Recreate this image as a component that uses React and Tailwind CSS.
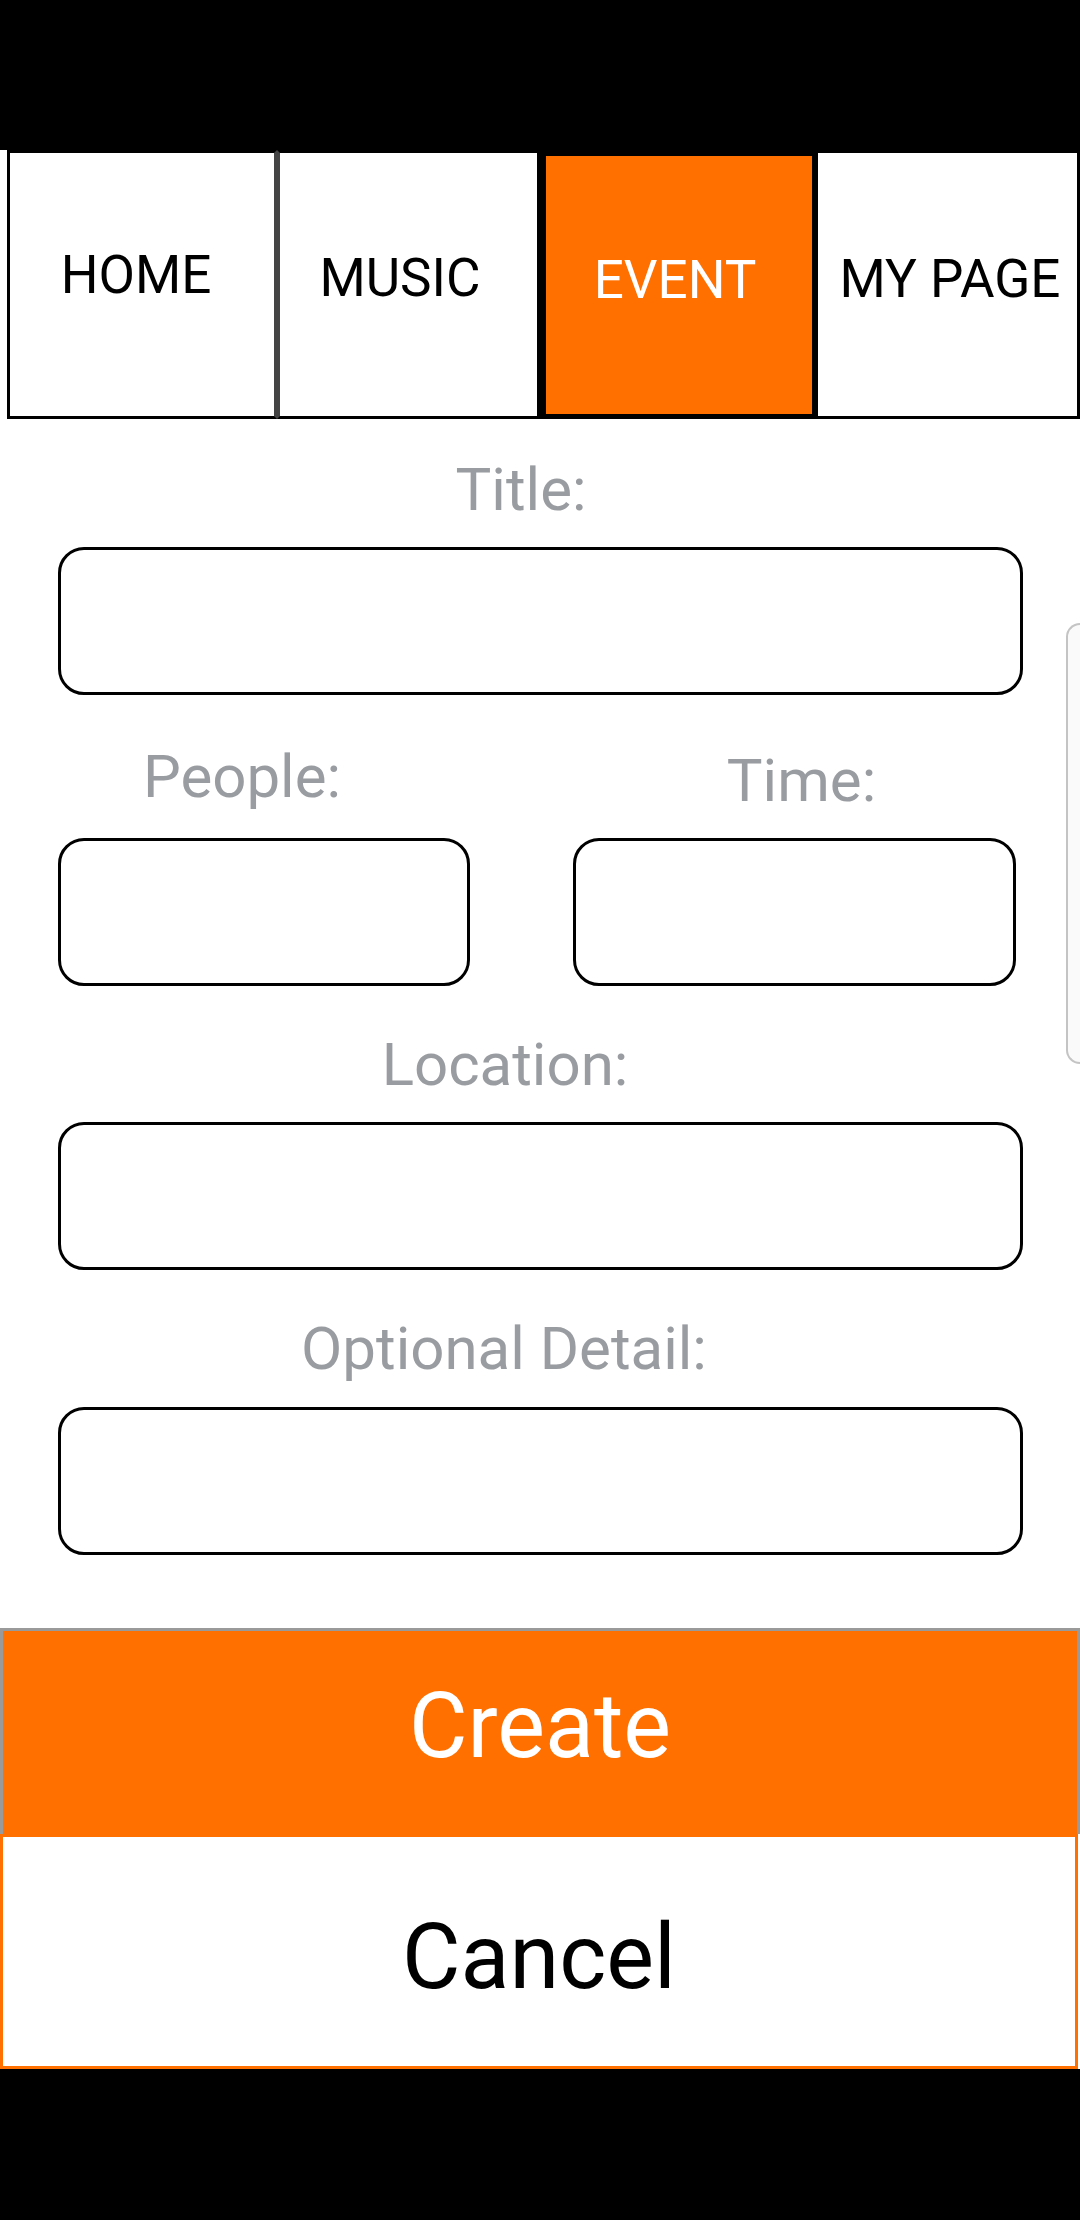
import React from "react";

const font = { fontFamily: 'Roboto, "Noto Sans", "Liberation Sans", sans-serif' };

function Label({ children, className = "" }) {
  return (
    <div
      className={`h-[60px] text-[60px] leading-none text-[#999ca0] whitespace-nowrap ${className}`}
    >
      {children}
    </div>
  );
}

function Field({ className = "" }) {
  return (
    <input
      type="text"
      className={`block h-[148px] border-[3px] border-black rounded-[26px] bg-white outline-none ${className}`}
    />
  );
}

export default function App() {
  return (
    <div className="relative w-[1080px] h-[2220px] flex flex-col bg-white overflow-hidden" style={font}>
      {/* status bar */}
      <div className="h-[150px] bg-black shrink-0" />

      {/* tabs */}
      <div className="flex h-[269px] shrink-0 pl-[7px]">
        <div className="w-[270px] h-full border-[3px] border-black border-r-[#444] bg-white flex items-center justify-center pb-[18px] pr-[12px] text-[53px] leading-none text-black">
          HOME
        </div>
        <div className="w-[263px] h-full border-[3px] border-black border-l-[#444] bg-white flex items-center justify-center pb-[13px] pr-[17px] text-[53px] leading-none text-black">
          MUSIC
        </div>
        <div className="w-[278px] h-full border-[6px] border-b-[5px] border-black bg-[#ff7000] flex items-center justify-center pb-[9px] pr-[8px] text-[53px] leading-none text-white">
          EVENT
        </div>
        <div className="w-[262px] h-full border-[3px] border-black border-l-0 bg-white flex items-center justify-center pb-[11px] pl-[5px] text-[53px] leading-none text-black whitespace-nowrap">
          MY PAGE
        </div>
      </div>

      {/* form */}
      <div className="flex flex-col pl-[58px] shrink-0">
        <Label className="mt-[41px] mb-[27px] -ml-[58px] w-[1080px] text-center pr-[38px]">Title:</Label>
        <Field className="w-[965px]" />

        <div className="flex items-start">
          <div className="flex flex-col w-[412px]">
            <Label className="mt-[52px] mb-[31px] text-center pr-[44px]">People:</Label>
            <Field className="w-[412px]" />
          </div>
          <div className="flex flex-col w-[443px] ml-[103px]">
            <Label className="mt-[56px] mb-[27px] text-center pl-[14px]">Time:</Label>
            <Field className="w-[443px]" />
          </div>
        </div>

        <Label className="mt-[49px] mb-[27px] -ml-[58px] w-[1080px] text-center pr-[70px]">Location:</Label>
        <Field className="w-[965px]" />

        <Label className="mt-[49px] mb-[28px] -ml-[58px] w-[1080px] text-center pr-[72px]">Optional Detail:</Label>
        <Field className="w-[965px]" />
      </div>

      {/* buttons */}
      <button className="mt-[73px] w-[1080px] h-[206px] shrink-0 border-[3px] border-b-0 border-[#9a9a9a] bg-[#ff7000] flex items-center justify-center pb-[12px] text-[90px] leading-none text-white">
        Create
      </button>
      <button className="w-[1078px] h-[235px] shrink-0 border-[3px] border-[#ff7000] bg-white flex items-center justify-center pt-[12px] text-[90px] leading-none text-black">
        Cancel
      </button>

      {/* nav bar */}
      <div className="flex-1 bg-black" />

      {/* edge panel handle */}
      <div className="absolute top-[623px] right-0 w-[14px] h-[441px] border-[2px] border-r-0 border-[#c4c4c4] rounded-l-[14px] bg-[#fafafa]" />
    </div>
  );
}
